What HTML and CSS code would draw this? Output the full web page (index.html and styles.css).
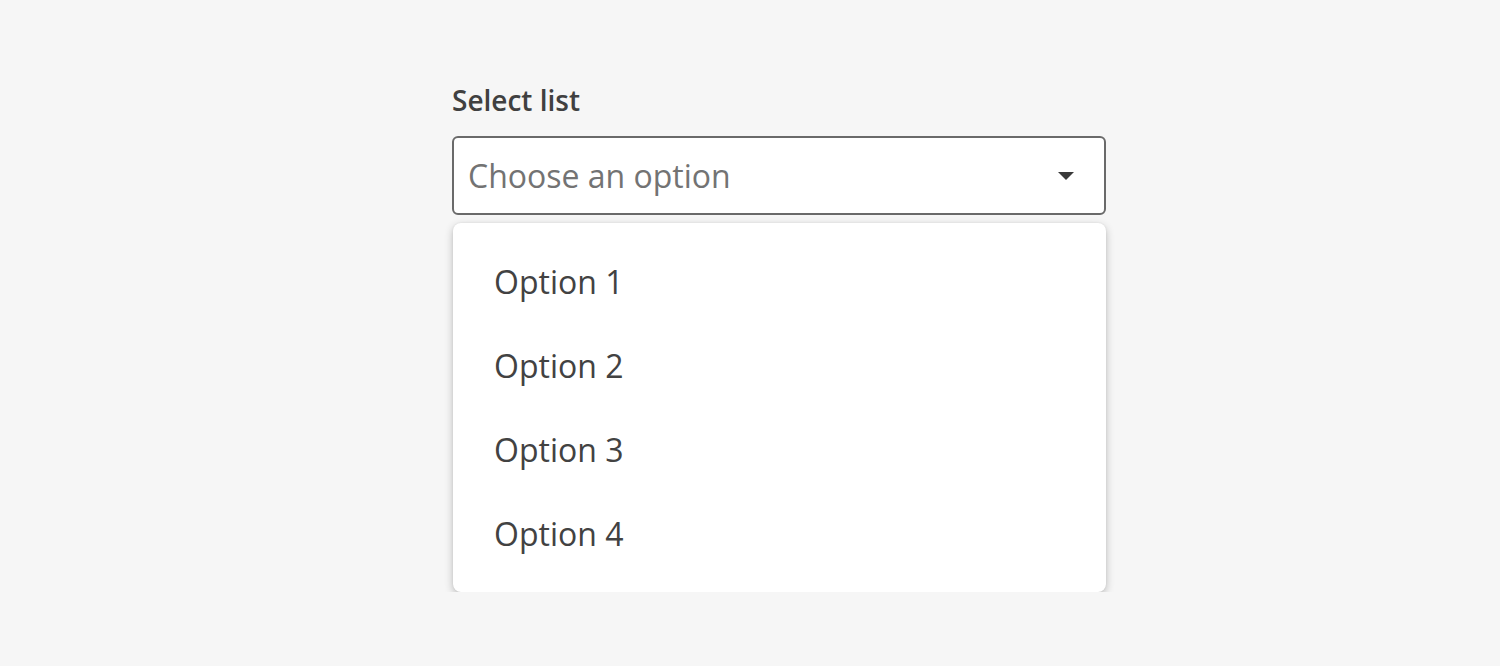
FILE: index.html
```html
<!DOCTYPE html>
<html>
<head>
<meta charset="utf-8">
<link rel="stylesheet" href="styles.css">
</head>
<body>
<div class="page">
  <div class="field">
    <label class="label">Select list</label>
    <div class="select">
      <span class="placeholder">Choose an option</span>
      <svg class="caret" width="18" height="10" viewBox="0 0 18 10"><path d="M1 1 L17 1 L9 9 Z" fill="#3a3a3a"/></svg>
    </div>
    <ul class="menu">
      <li class="option">Option 1</li>
      <li class="option">Option 2</li>
      <li class="option">Option 3</li>
      <li class="option">Option 4</li>
    </ul>
  </div>
</div>
</body>
</html>
```
FILE: styles.css
```css
html, body {
  margin: 0;
  padding: 0;
  background: #f6f6f6;
}
body {
  font-family: "Open Sans", "Liberation Sans", sans-serif;
  color: #3f3f3f;
}
.page {
  padding: 80px 0 0 452px;
}
.field {
  width: 654px;
  display: flex;
  flex-direction: column;
}
.label {
  font-size: 28px;
  font-weight: 600;
  line-height: 40px;
  color: #404040;
  margin-bottom: 16px;
}
.select {
  box-sizing: border-box;
  height: 79px;
  border: 2px solid #6a6a6a;
  border-radius: 6px;
  background: #fff;
  display: flex;
  align-items: center;
  justify-content: space-between;
  padding: 0 29px 0 14px;
}
.placeholder {
  font-size: 32px;
  color: #737373;
}
.caret {
  display: block;
}
.menu {
  list-style: none;
  margin: 8px 0 0 1px;
  padding: 16px 0 17px 0;
  background: #fff;
  border-radius: 8px;
  box-shadow: 0 3px 9px rgba(0,0,0,0.24), 0 0 2px rgba(0,0,0,0.08);
}
.option {
  height: 84px;
  display: flex;
  align-items: center;
  padding-left: 41px;
  font-size: 32px;
  color: #424242;
}
```
